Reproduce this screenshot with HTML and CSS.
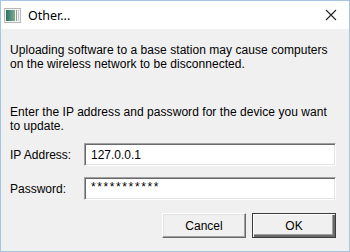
FILE: index.html
```html
<!DOCTYPE html>
<html>
<head>
<meta charset="utf-8">
<link rel="stylesheet" href="styles.css">
</head>
<body>
<div class="window">
  <div class="titlebar">
    <svg class="app-icon" width="17" height="15" viewBox="0 0 17 15">
      <rect x="0.5" y="0.5" width="16" height="14" fill="#f4f4f4" stroke="#b8b8b8"/>
      <defs>
        <linearGradient id="g" x1="0" y1="0" x2="1" y2="0">
          <stop offset="0" stop-color="#2f6f6a"/>
          <stop offset="1" stop-color="#7fb08a"/>
        </linearGradient>
      </defs>
      <rect x="2" y="2" width="9" height="11" fill="url(#g)"/>
      <rect x="12" y="2" width="1" height="11" fill="#9a9a9a"/>
      <rect x="14" y="2" width="1" height="11" fill="#c8c8c8"/>
    </svg>
    <span class="title">Other...</span>
    <svg class="close" width="12" height="12" viewBox="0 0 12 12">
      <path d="M1 1 L11 11 M11 1 L1 11" stroke="#222" stroke-width="1.1" fill="none"/>
    </svg>
  </div>
  <div class="content">
    <p class="msg">Uploading software to a base station may cause computers on the wireless network to be disconnected.</p>
    <p class="msg second">Enter the IP address and password for the device you want to update.</p>
    <div class="form">
      <label class="lbl">IP Address:</label>
      <div class="field">127.0.0.1</div>
      <label class="lbl">Password:</label>
      <div class="field pw">***********</div>
    </div>
    <div class="buttons">
      <div class="btn">Cancel</div>
      <div class="btn default">OK</div>
    </div>
  </div>
</div>
</body>
</html>
```
FILE: styles.css
```css
html, body {
  margin: 0;
  padding: 0;
  background: #f0f0f0;
}
.window {
  width: 350px;
  height: 252px;
  box-sizing: border-box;
  border: 1px solid #a7c6e6;
  background: #f0f0f0;
  font-family: "Liberation Sans", Arial, sans-serif;
  font-size: 12px;
  color: #000;
  display: flex;
  flex-direction: column;
}
.titlebar {
  height: 28px;
  background: #fff;
  display: flex;
  align-items: center;
  padding-left: 3px;
  padding-right: 11px;
  flex-shrink: 0;
}
.title {
  font-family: "Noto Sans", "Open Sans", sans-serif;
  font-size: 12.5px;
  margin-left: 7px;
  color: #000;
  flex: 1;
}
.close {
  margin-right: 1px;
}
.content {
  padding: 14px 12px 0 9px;
  display: flex;
  flex-direction: column;
}
.msg {
  margin: 0;
  line-height: 14px;
  letter-spacing: 0.05px;
}
.second {
  margin-top: 34px;
}
.form {
  margin-top: 10px;
  display: grid;
  grid-template-columns: 74px 252px;
  row-gap: 11px;
  align-items: center;
}
.field {
  height: 23px;
  box-sizing: border-box;
  background: #fff;
  border-top: 1px solid #a0a0a0;
  border-left: 1px solid #a0a0a0;
  border-right: 1px solid #fff;
  border-bottom: 1px solid #fff;
  box-shadow: inset 1px 1px 0 #696969, inset -1px -1px 0 #e3e3e3;
  padding: 3px 6px 0;
  line-height: 16px;
}
.pw {
  letter-spacing: 1.6px;
  padding-top: 1px;
}
.buttons {
  margin-top: 13px;
  display: flex;
  justify-content: flex-end;
  gap: 6px;
  padding-right: 1px;
}
.btn {
  width: 84px;
  height: 25px;
  box-sizing: border-box;
  background: #f0f0f0;
  border-top: 1px solid #fff;
  border-left: 1px solid #fff;
  border-right: 1px solid #696969;
  border-bottom: 1px solid #696969;
  box-shadow: inset -1px -1px 0 #a0a0a0, inset 1px 1px 0 #e3e3e3;
  display: flex;
  align-items: center;
  justify-content: center;
}
.default {
  border: 1px solid #3c3c3c;
  box-shadow: inset 1px 1px 0 #fff, inset -2px -2px 0 #696969, inset -3px -3px 0 #a0a0a0;
}
```
